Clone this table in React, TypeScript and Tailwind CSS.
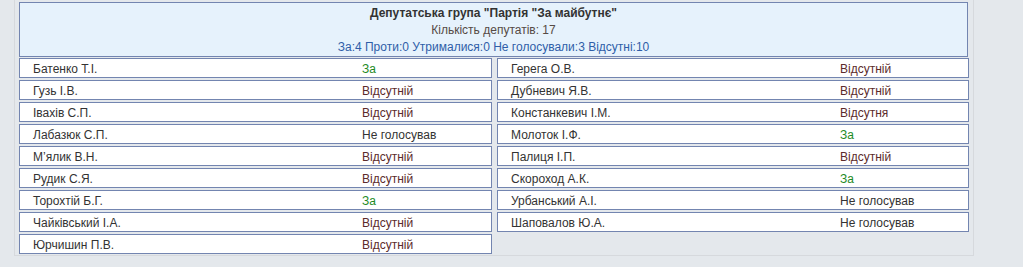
const rows: [string, string][] = [
  ['Батенко Т.І.', 'За'],
  ['Герега О.В.', 'Відсутній'],
  ['Гузь І.В.', 'Відсутній'],
  ['Дубневич Я.В.', 'Відсутній'],
  ['Івахів С.П.', 'Відсутній'],
  ['Констанкевич І.М.', 'Відсутня'],
  ['Лабазюк С.П.', 'Не голосував'],
  ['Молоток І.Ф.', 'За'],
  ['М’ялик В.Н.', 'Відсутній'],
  ['Палиця І.П.', 'Відсутній'],
  ['Рудик С.Я.', 'Відсутній'],
  ['Скороход А.К.', 'За'],
  ['Торохтій Б.Г.', 'За'],
  ['Урбанський А.І.', 'Не голосував'],
  ['Чайківський І.А.', 'Відсутній'],
  ['Шаповалов Ю.А.', 'Не голосував'],
  ['Юрчишин П.В.', 'Відсутній'],
];

const voteColor = (v: string) => {
  if (v === 'За') return 'text-[#1e8a1e]';
  if (v === 'Не голосував') return 'text-[#333333]';
  return 'text-[#5c2b2b]';
};

const DeputyRow = ({ name, vote }: { name: string; vote: string }) => (
  <div className="flex h-[20px] items-center border border-[#7385b0] bg-white pl-[13px] pt-[2px] text-[12px] leading-[14px]">
    <span className="w-[329px] text-[#333333]">{name}</span>
    <span className={voteColor(vote)}>{vote}</span>
  </div>
);

export default function App() {
  return (
    <div className="h-[267px] w-full bg-[#e4e8ec] font-['Liberation_Sans',Arial,sans-serif]">
      <div className="ml-[14px] w-[960px] border-b border-l border-r border-[#d6d9dd] pb-[1px] pl-[4px] pt-[2px]">
        <div className="w-[949px] border border-[#7385b0] bg-[#e6f2fc] pt-[2px] text-center text-[12px] leading-[17px]">
          <div className="font-bold text-[#333333]">Депутатська група "Партія "За майбутнє"</div>
          <div className="text-[#554a45]">Кількість депутатів: 17</div>
          <div className="text-[#2f5ea8]">За:4 Проти:0 Утрималися:0 Не голосували:3 Відсутні:10</div>
        </div>
        <div className="mt-[1px] grid w-[950px] grid-cols-[473px_472px] gap-x-[5px] gap-y-[2px]">
          {rows.map(([n, v]) => (
            <DeputyRow key={n} name={n} vote={v} />
          ))}
        </div>
      </div>
    </div>
  );
}
